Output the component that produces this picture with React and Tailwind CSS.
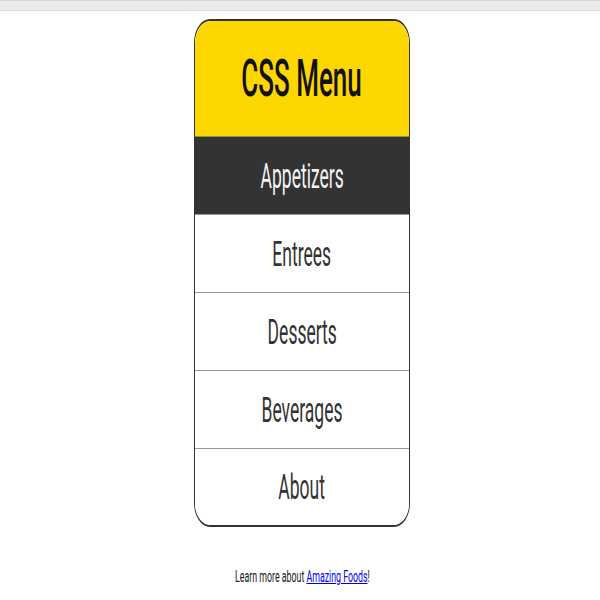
import React from 'react';

const items = ['Appetizers', 'Entrees', 'Desserts', 'Beverages', 'About'];

const App = () => {
  return (
    <div className="min-h-screen bg-white font-['Roboto',sans-serif]">
      <div className="h-[11px] bg-[#ebebeb] border-y border-[#d9d9d9]" />

      <div className="flex flex-col items-center pt-[8px]">
        <nav className="w-[216px] ml-[4px] overflow-hidden border-x border-y-2 border-[#333] rounded-[16px_/_24px]">
          <div className="h-[116px] bg-[#ffd700] border-b border-[#9a8a3a] flex items-center justify-center">
            <span className="inline-block scale-x-50 text-[52px] font-medium text-[#111] whitespace-nowrap">CSS Menu</span>
          </div>
          <ul>
            {items.map((item, i) => (
              <li
                key={item}
                className={
                  'flex items-center justify-center pt-[3px] ' +
                  (i === 0 ? 'bg-[#333] text-[#f2f2f2] ' : 'bg-white text-[#333] ') +
                  (i < items.length - 1 ? 'h-[78px] border-b border-[#999]' : 'h-[76px]')
                }
              >
                <span className="inline-block scale-x-50 text-[35px] whitespace-nowrap">{item}</span>
              </li>
            ))}
          </ul>
        </nav>

        <p className="mt-[38px] ml-[4px] text-[16px] text-[#222] whitespace-nowrap">
          <span className="inline-block scale-x-[0.55]">
            Learn more about <a href="#" className="text-[#0000ee] underline">Amazing Foods</a>!
          </span>
        </p>
      </div>
    </div>
  );
};

export default App;
